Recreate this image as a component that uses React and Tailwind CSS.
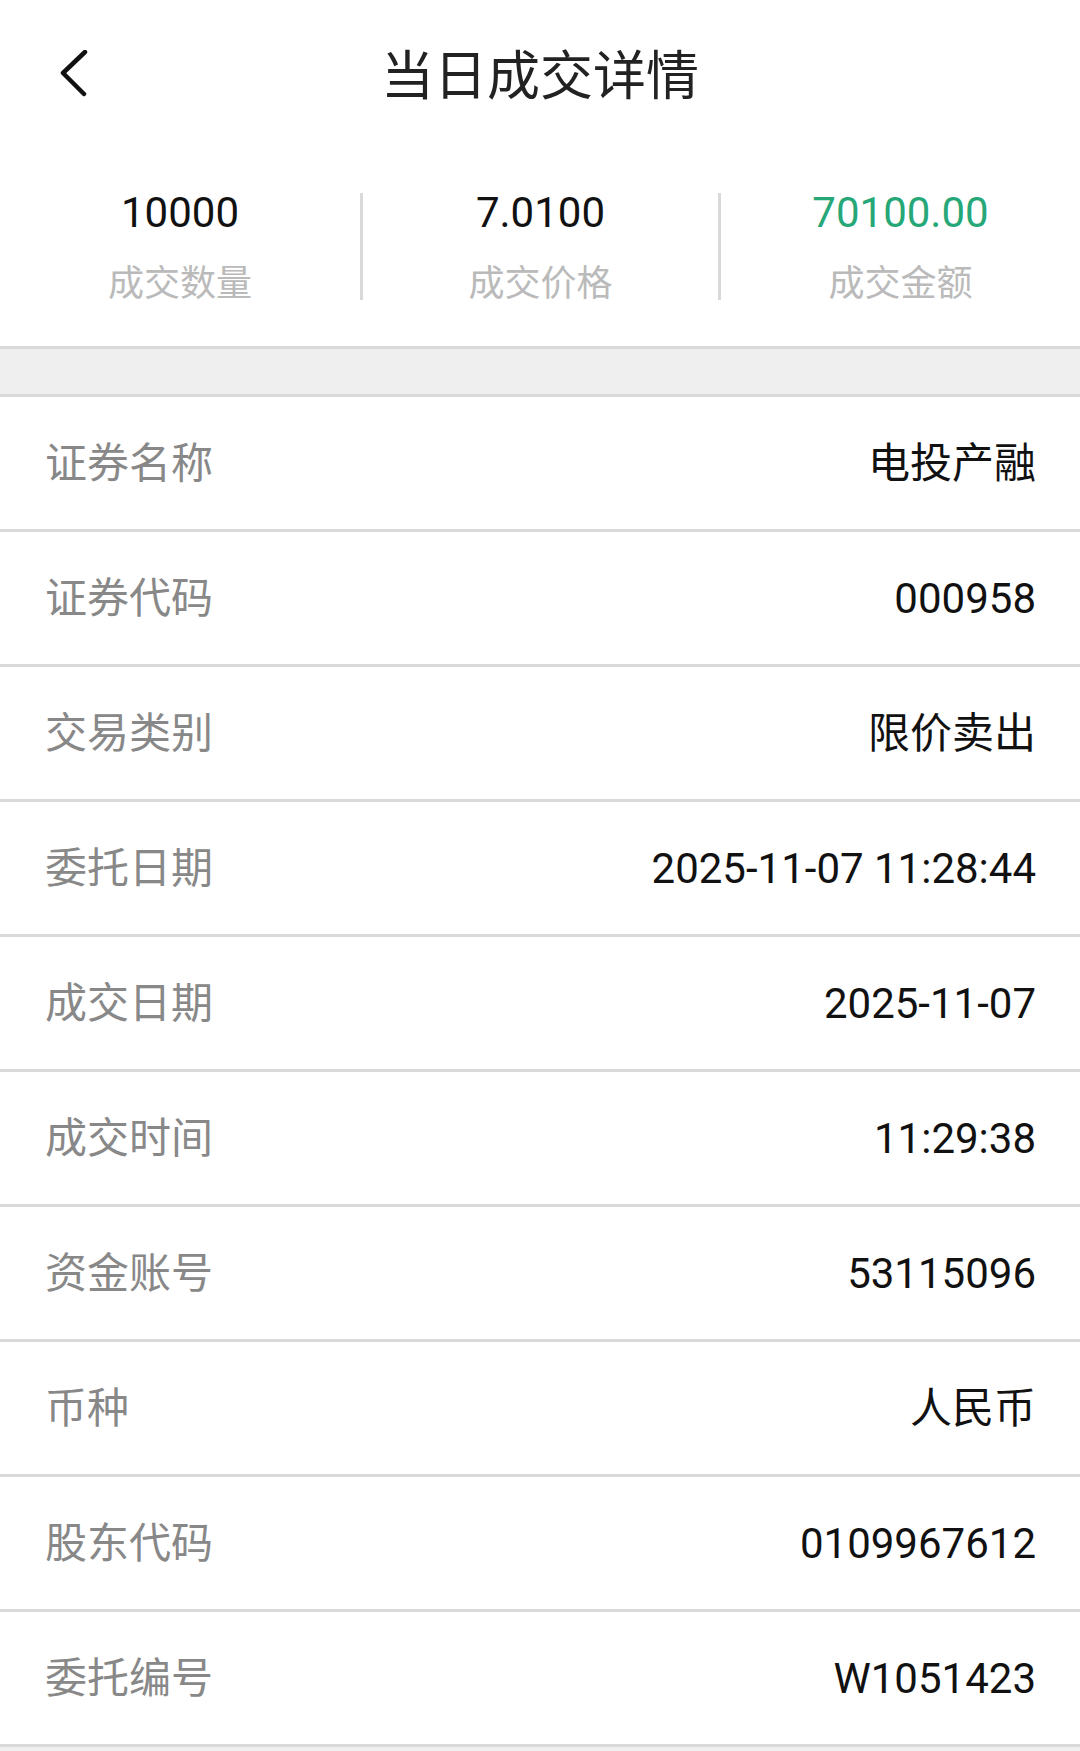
import React from 'react';

const stats = [
  { value: '10000', label: '成交数量', color: 'text-[#111111]' },
  { value: '7.0100', label: '成交价格', color: 'text-[#111111]' },
  { value: '70100.00', label: '成交金额', color: 'text-[#26a777]' },
];

const rows = [
  ['证券名称', '电投产融'],
  ['证券代码', '000958'],
  ['交易类别', '限价卖出'],
  ['委托日期', '2025-11-07 11:28:44'],
  ['成交日期', '2025-11-07'],
  ['成交时间', '11:29:38'],
  ['资金账号', '53115096'],
  ['币种', '人民币'],
  ['股东代码', '0109967612'],
  ['委托编号', 'W1051423'],
];

const App = () => {
  return (
    <div className="min-h-[1751px] bg-[#efefef] font-['Roboto','Noto_Sans_CJK_SC',sans-serif]">
      {/* Header */}
      <header className="bg-white h-[152px] grid grid-cols-[1fr_auto_1fr] items-center">
        <button className="justify-self-start ml-[58px]">
          <svg width="30" height="52" viewBox="0 0 30 52" fill="none">
            <polyline points="27,2 5,23 26,44" stroke="#111" strokeWidth="4.5" strokeLinecap="round" strokeLinejoin="round" />
          </svg>
        </button>
        <h1 className="text-[53px] leading-none text-[#222222] mt-[2px]">当日成交详情</h1>
        <div />
      </header>

      {/* Summary */}
      <div className="bg-white grid grid-cols-[360px_358px_1fr] pt-[41px] pb-[46px]">
        {stats.map((s, i) => (
          <div
            key={s.label}
            className={`h-[107px] flex flex-col items-center justify-between ${i > 0 ? 'border-l-[3px] border-[#d9d9d9]' : ''}`}
          >
            <div className={`text-[42px] leading-[40px] ${s.color}`}>{s.value}</div>
            <div className="text-[36px] leading-[32px] text-[#bababa]">{s.label}</div>
          </div>
        ))}
      </div>

      {/* Spacer band */}
      <div className="h-[51px] bg-[#efefef] border-y-[3px] border-[#d9d9d9]" />

      {/* Detail rows */}
      <div className="bg-white">
        {rows.map(([label, value]) => (
          <div key={label} className="h-[135px] border-b-[3px] border-[#d9d9d9] flex items-center justify-between pl-[45px] pr-[44px]">
            <span className="text-[42px] text-[#888888]">{label}</span>
            <span className="text-[42px] text-[#111111]">{value}</span>
          </div>
        ))}
      </div>
    </div>
  );
};

export default App;
